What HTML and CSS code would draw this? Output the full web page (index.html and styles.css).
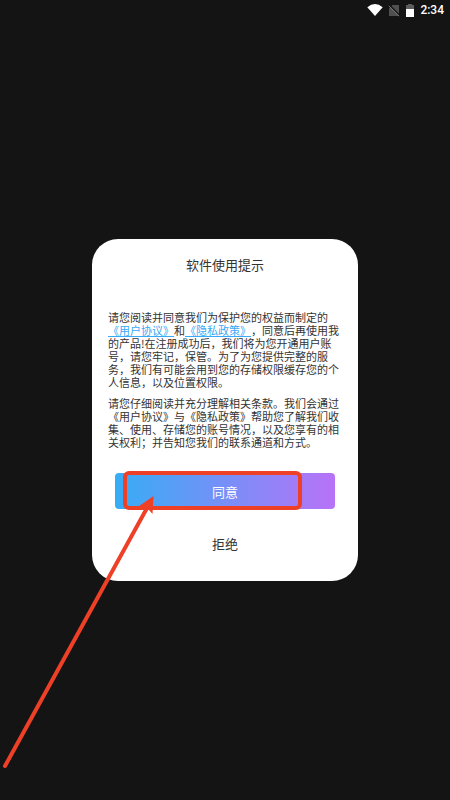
FILE: index.html
```
<!DOCTYPE html>
<html lang="zh-CN">
  <head>
    <title>软件使用提示</title>
    <meta charset="utf-8" />
    <meta name="viewport" content="width=device-width, initial-scale=1" />
    <link rel="stylesheet" href="styles.css">
  </head>
  <body>

    <header class="status-bar">
      <svg class="status-wifi" viewBox="0 0 16 12" width="16" height="12">
        <path d="M0.3 3.2 Q8 -3 15.700 3.2 L8 12 Z" fill="#fff"/>
      </svg>
      <svg class="status-sim" viewBox="0 0 12 13" width="12" height="13">
        <path d="M4.5 1 H11 V12 H1 V4.5 Z" fill="#505050"/>
        <path d="M1.500 1 L12 11.500" stroke="#141414" stroke-width="1.2"/>
        <path d="M0.8 1.8 L11 12.2" stroke="#777" stroke-width="1"/>
      </svg>
      <svg class="status-battery" viewBox="0 0 8 13" width="8" height="13">
        <path d="M2 0 H6 V1 H8 V6 H0 V1 H2 Z" fill="#5c5c5c"/>
        <path d="M0 5 H8 V13 H0 Z" fill="#fff"/>
      </svg>
      <span class="status-time">2:34</span>
    </header>

    <main class="screen">
      <section class="dialog">
        <h1 class="dialog-title">软件使用提示</h1>
        <div class="dialog-text">
          <p>请您阅读并同意我们为保护您的权益而制定的<a href="#">《用户协议》</a>和<a href="#">《隐私政策》</a>，同意后再使用我的产品!在注册成功后，我们将为您开通用户账号，请您牢记，保管。为了为您提供完整的服务，我们有可能会用到您的存储权限缓存您的个人信息，以及位置权限。</p>
          <p>请您仔细阅读并充分理解相关条款。我们会通过《用户协议》与《隐私政策》帮助您了解我们收集、使用、存储您的账号情况，以及您享有的相关权利；并告知您我们的联系通道和方式。</p>
        </div>
        <div class="agree-row">
          <button type="button" class="button-agree">同意</button>
          <!-- marker box and arrow over the button -->
          <div class="marker"></div>
          <svg class="arrow" viewBox="0 0 154 276" width="154" height="276">
            <path d="M5 270 L147 12" stroke="#ee4027" stroke-width="4" stroke-linecap="round"/>
            <path d="M153.5 0 L137 11.5 L145 12 L149.500 14.500 L152.500 18 Z" fill="#ee4027"/>
          </svg>
        </div>
        <button type="button" class="button-refuse">拒绝</button>
      </section>
    </main>

  </body>
</html>
```
FILE: styles.css
```
* {
    box-sizing: border-box;
}

body {
    margin: 0;
    min-height: 100vh;
    display: flex;
    flex-direction: column;
    background-color: #141414;
    font-family: "Noto Sans CJK SC", sans-serif;
    color: #333;
}

.status-bar {
    display: flex;
    justify-content: flex-end;
    align-items: center;
    height: 20px;
    padding-right: 6px;
}

.status-wifi {
    margin-right: 5px;
}

.status-sim {
    margin-right: 6px;
}

.status-battery {
    margin-right: 6px;
}

.status-time {
    font-family: Roboto, sans-serif;
    font-size: 12px;
    font-weight: 500;
    color: #fff;
}

.screen {
    flex: 1;
    display: flex;
    flex-direction: column;
    justify-content: center;
    padding: 0 92px;
}

.dialog {
    display: flex;
    flex-direction: column;
    align-items: center;
    padding: 16px 16px 24px;
    border-radius: 26px;
    background-color: #fff;
}

.dialog-title {
    margin: 0;
    font-size: 13px;
    font-weight: 400;
    line-height: 20px;
}

.dialog-text {
    margin-top: 36px;
    font-size: 11px;
    line-height: 13px;
    text-spacing-trim: space-all;
}

.dialog-text p {
    margin: 0 0 8px;
}

.dialog-text a {
    color: #3aa9f5;
    text-decoration: underline;
}

.agree-row {
    position: relative;
    align-self: stretch;
    margin: 16px 7px 0;
}

.button-agree {
    display: block;
    width: 100%;
    height: 36px;
    padding: 0;
    border: none;
    border-radius: 4px;
    background: linear-gradient(to right, #36adf6, #b872f8);
    color: #fff;
    font-family: inherit;
    font-size: 13px;
    cursor: pointer;
}

.marker {
    position: absolute;
    top: -2px;
    left: 8px;
    width: 179px;
    height: 39px;
    border: 4px solid #ee4027;
    border-radius: 6px;
    pointer-events: none;
}

.arrow {
    position: absolute;
    top: 23px;
    left: -115px;
    fill: none;
    pointer-events: none;
}

.button-refuse {
    margin-top: 22px;
    padding: 0 24px;
    border: none;
    background: none;
    color: #333;
    font-family: inherit;
    font-size: 13px;
    line-height: 26px;
    cursor: pointer;
}
```
